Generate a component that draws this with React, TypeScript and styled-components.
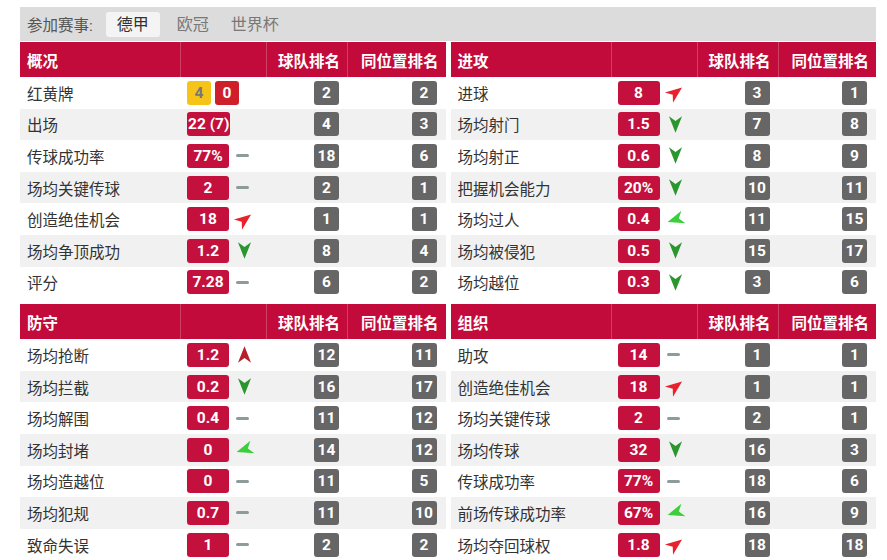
import React from 'react'
import styled, { createGlobalStyle } from 'styled-components'

type Trend = 'flat' | 'up' | 'rise' | 'down' | 'slip' | 'none'

type StatRow = {
  label: string
  value?: string
  cards?: [string, string]
  trend: Trend
  team: number
  pos: number
}

type Block = {
  title: string
  rows: StatRow[]
}

const sections: Block[][] = [
  [
    {
      title: '概况',
      rows: [
        { label: '红黄牌', cards: ['4', '0'], trend: 'none', team: 2, pos: 2 },
        { label: '出场', value: '22 (7)', trend: 'none', team: 4, pos: 3 },
        { label: '传球成功率', value: '77%', trend: 'flat', team: 18, pos: 6 },
        { label: '场均关键传球', value: '2', trend: 'flat', team: 2, pos: 1 },
        { label: '创造绝佳机会', value: '18', trend: 'rise', team: 1, pos: 1 },
        { label: '场均争顶成功', value: '1.2', trend: 'down', team: 8, pos: 4 },
        { label: '评分', value: '7.28', trend: 'flat', team: 6, pos: 2 },
      ],
    },
    {
      title: '进攻',
      rows: [
        { label: '进球', value: '8', trend: 'rise', team: 3, pos: 1 },
        { label: '场均射门', value: '1.5', trend: 'down', team: 7, pos: 8 },
        { label: '场均射正', value: '0.6', trend: 'down', team: 8, pos: 9 },
        { label: '把握机会能力', value: '20%', trend: 'down', team: 10, pos: 11 },
        { label: '场均过人', value: '0.4', trend: 'slip', team: 11, pos: 15 },
        { label: '场均被侵犯', value: '0.5', trend: 'down', team: 15, pos: 17 },
        { label: '场均越位', value: '0.3', trend: 'down', team: 3, pos: 6 },
      ],
    },
  ],
  [
    {
      title: '防守',
      rows: [
        { label: '场均抢断', value: '1.2', trend: 'up', team: 12, pos: 11 },
        { label: '场均拦截', value: '0.2', trend: 'down', team: 16, pos: 17 },
        { label: '场均解围', value: '0.4', trend: 'flat', team: 11, pos: 12 },
        { label: '场均封堵', value: '0', trend: 'slip', team: 14, pos: 12 },
        { label: '场均造越位', value: '0', trend: 'flat', team: 11, pos: 5 },
        { label: '场均犯规', value: '0.7', trend: 'flat', team: 11, pos: 10 },
        { label: '致命失误', value: '1', trend: 'flat', team: 2, pos: 2 },
      ],
    },
    {
      title: '组织',
      rows: [
        { label: '助攻', value: '14', trend: 'flat', team: 1, pos: 1 },
        { label: '创造绝佳机会', value: '18', trend: 'rise', team: 1, pos: 1 },
        { label: '场均关键传球', value: '2', trend: 'flat', team: 2, pos: 1 },
        { label: '场均传球', value: '32', trend: 'down', team: 16, pos: 3 },
        { label: '传球成功率', value: '77%', trend: 'flat', team: 18, pos: 6 },
        { label: '前场传球成功率', value: '67%', trend: 'slip', team: 16, pos: 9 },
        { label: '场均夺回球权', value: '1.8', trend: 'rise', team: 18, pos: 18 },
      ],
    },
  ],
]

const GlobalStyle = createGlobalStyle`
  body {
    margin: 0;
    background: #fff;
    font-family: Roboto, "Noto Sans CJK SC", sans-serif;
    color: #333;
  }
`

const Page = styled.div`
  padding: 7px 11px 0 20px;
  display: flex;
  flex-direction: column;
  gap: 6px;
`

const FilterBar = styled.div`
  height: 34px;
  background: #dcdcdc;
  display: flex;
  align-items: center;
  padding-left: 7px;
  margin-bottom: -5px;
`

const FilterLabel = styled.span`
  font-size: 15.5px;
  color: #555;
  margin-right: 13px;
`

const Tab = styled.span<{ $active?: boolean }>`
  font-size: 16px;
  height: 25px;
  line-height: 25px;
  padding: 0 11px;
  margin-right: ${p => (p.$active ? '6px' : '0')};
  border-radius: 3px;
  color: ${p => (p.$active ? '#333' : '#787878')};
  background: ${p => (p.$active ? '#f4f4f4' : 'transparent')};
`

const Section = styled.div`
  display: grid;
  grid-template-columns: 1fr 1fr;
  gap: 5px;
`

const Table = styled.div`
  display: flex;
  flex-direction: column;
`

const cols = 'grid-template-columns: 161px 86px 81px 1fr;'

const HeadRow = styled.div`
  display: grid;
  ${cols}
  height: 35px;
  background: #c20b3a;
  color: #fff;
  font-weight: bold;
  font-size: 15.5px;
`

const HeadCell = styled.div<{ $right?: boolean; $last?: boolean }>`
  display: flex;
  align-items: center;
  justify-content: ${p => (p.$right ? 'flex-end' : 'flex-start')};
  padding: 0 7px;
  border-right: ${p => (p.$last ? 'none' : '1px solid rgba(255, 255, 255, 0.22)')};
`

const Row = styled.div<{ $shade: boolean }>`
  display: grid;
  ${cols}
  height: 31.6px;
  background: ${p => (p.$shade ? '#f1f1f1' : '#fff')};
`

const Label = styled.div`
  display: flex;
  align-items: center;
  padding-left: 7px;
  font-size: 15.5px;
  color: #333;
  white-space: nowrap;
`

const ValueCell = styled.div`
  display: flex;
  align-items: center;
  padding-left: 6px;
  gap: 5px;
`

const Badge = styled.span<{ $tone: 'red' | 'yellow' | 'card' }>`
  display: inline-flex;
  align-items: center;
  justify-content: center;
  height: 24px;
  min-width: ${p => (p.$tone === 'red' ? '42px' : '24px')};
  padding: 0 1px;
  box-sizing: border-box;
  border-radius: 3px;
  font-weight: bold;
  font-size: 15.5px;
  color: ${p => (p.$tone === 'yellow' ? '#777' : '#fff')};
  background: ${p =>
    p.$tone === 'yellow' ? '#f6c419' : p.$tone === 'card' ? '#cf1f2b' : '#c3103c'};
`

const Cards = styled.div`
  display: flex;
  gap: 4px;
`

const RankCell = styled.div`
  display: flex;
  align-items: center;
  justify-content: flex-end;
  padding-right: 9px;
`

const Rank = styled.span`
  display: inline-flex;
  align-items: center;
  justify-content: center;
  width: 25px;
  height: 24px;
  border-radius: 3px;
  background: #666;
  color: #fff;
  font-weight: bold;
  font-size: 15.5px;
`

const Dash = styled.span`
  display: block;
  width: 13px;
  height: 3px;
  border-radius: 2px;
  background: #8e9b9b;
  margin-left: 2px;
`

const arrowLook: Record<string, { color: string; angle: number }> = {
  up: { color: '#b5202d', angle: 0 },
  rise: { color: '#e8212c', angle: 52 },
  down: { color: '#2a962e', angle: 180 },
  slip: { color: '#3ccf3c', angle: -108 },
}

function TrendMark({ trend }: { trend: Trend }) {
  if (trend === 'none') return null
  if (trend === 'flat') return <Dash />
  const look = arrowLook[trend]
  return (
    <svg width="21" height="21" viewBox="0 0 24 24" style={{ transform: `rotate(${look.angle}deg)` }}>
      <path d="M12 2.5 L19.5 21.5 L12 16 L4.5 21.5 Z" fill={look.color} />
    </svg>
  )
}

function StatTable({ block }: { block: Block }) {
  return (
    <Table>
      <HeadRow>
        <HeadCell>{block.title}</HeadCell>
        <HeadCell />
        <HeadCell $right>球队排名</HeadCell>
        <HeadCell $right $last>同位置排名</HeadCell>
      </HeadRow>
      {block.rows.map((r, i) => (
        <Row key={r.label} $shade={i % 2 === 1}>
          <Label>{r.label}</Label>
          <ValueCell>
            {r.cards ? (
              <Cards>
                <Badge $tone="yellow">{r.cards[0]}</Badge>
                <Badge $tone="card">{r.cards[1]}</Badge>
              </Cards>
            ) : (
              <Badge $tone="red">{r.value}</Badge>
            )}
            <TrendMark trend={r.trend} />
          </ValueCell>
          <RankCell>
            <Rank>{r.team}</Rank>
          </RankCell>
          <RankCell>
            <Rank>{r.pos}</Rank>
          </RankCell>
        </Row>
      ))}
    </Table>
  )
}

export default function App() {
  return (
    <>
      <GlobalStyle />
      <Page>
        <FilterBar>
          <FilterLabel>参加赛事:</FilterLabel>
          <Tab $active>德甲</Tab>
          <Tab>欧冠</Tab>
          <Tab>世界杯</Tab>
        </FilterBar>
        {sections.map((pair, i) => (
          <Section key={i}>
            {pair.map(b => (
              <StatTable key={b.title} block={b} />
            ))}
          </Section>
        ))}
      </Page>
    </>
  )
}
